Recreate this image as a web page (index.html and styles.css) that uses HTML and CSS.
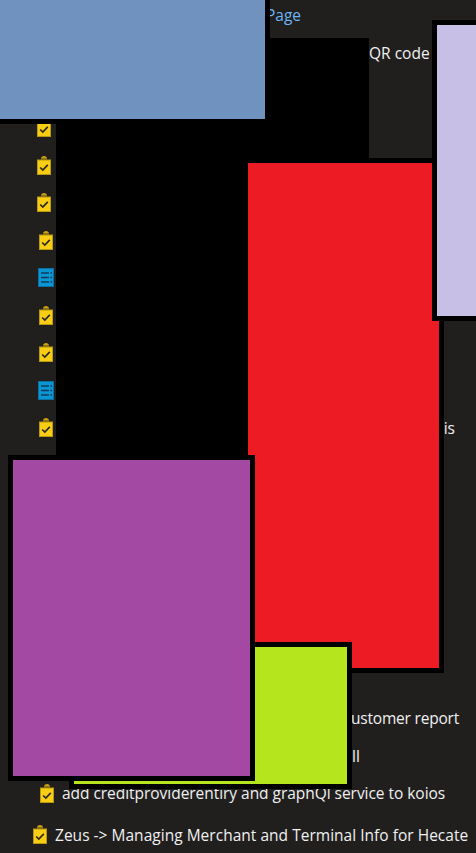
FILE: index.html
```html
<!DOCTYPE html>
<html lang="en">
<head>
<meta charset="utf-8">
<title>Work items</title>
<link rel="stylesheet" href="styles.css">
</head>
<body>
<svg class="defs" width="0" height="0" aria-hidden="true">
  <symbol id="task" viewBox="0 0 14 19">
    <path d="M4 4V2.600C4 1 5.400 0 7 0s3 1 3 2.600V4z" fill="#c9a012"/>
    <rect x="4" y="2.500" width="6" height="2.500" fill="#5c4a12"/>
    <rect x=".5" y="4" width="13" height="14.500" fill="#f8cd14" stroke="#b59a10"/>
    <path d="M3.200 11.500l2.600 2.600 5-5.300" fill="none" stroke="#2b2b26" stroke-width="1.700"/>
  </symbol>
  <symbol id="story" viewBox="0 0 16 19">
    <rect x=".5" y=".5" width="15" height="18" fill="#0a96d3" stroke="#0d6ea3"/>
    <path d="M3 5h8M3 9.500h8M3 14h8" stroke="#123a55" stroke-width="1.600"/>
    <path d="M12.500 5h1.500M12.500 9.500h1.500M12.500 14h1.500" stroke="#123a55" stroke-width="1.600"/>
  </symbol>
</svg>

<ul class="list">
  <li class="row row-page"><a class="link">Page</a></li>
  <li class="row row-qr">QR code</li>
  <li class="row row-i37 row-first"><svg class="ico"><use href="#task"/></svg></li>
  <li class="row row-i37"><svg class="ico"><use href="#task"/></svg></li>
  <li class="row row-i37"><svg class="ico"><use href="#task"/></svg></li>
  <li class="row row-i39"><svg class="ico"><use href="#task"/></svg></li>
  <li class="row row-i38"><svg class="ico doc"><use href="#story"/></svg></li>
  <li class="row row-i39"><svg class="ico"><use href="#task"/></svg></li>
  <li class="row row-i39"><svg class="ico"><use href="#task"/></svg></li>
  <li class="row row-i38"><svg class="ico doc"><use href="#story"/></svg></li>
  <li class="row row-i39 row-is"><svg class="ico"><use href="#task"/></svg><span>is</span></li>
  <li class="row row-report">ustomer report</li>
  <li class="row row-ll">ll</li>
  <li class="row row-koios"><svg class="ico"><use href="#task"/></svg><span>add creditproviderentiry and graphQl service to koios</span></li>
  <li class="row row-zeus"><svg class="ico"><use href="#task"/></svg><span>Zeus -&gt; Managing Merchant and Terminal Info for Hecate</span></li>
</ul>

<div class="block panel"></div>
<div class="block red"></div>
<div class="block lavender"></div>
<div class="block blue"></div>
<div class="block lime"></div>
<div class="block purple"></div>
</body>
</html>
```

FILE: styles.css
```css
* { box-sizing: border-box; }
html, body { margin: 0; height: 853px; overflow: hidden; }
body {
  position: relative;
  background: #201f1e;
  color: #f0f0f0;
  font: 15.5px/20px "Open Sans", "Noto Sans", sans-serif;
}
.defs { position: absolute; }
.list {
  list-style: none;
  margin: 0;
  padding: 0;
  display: flex;
  flex-direction: column;
  gap: 7.500px;
}
.row { height: 30px; display: flex; align-items: center; gap: 8px; white-space: nowrap; }
.link { color: #6cb4f5; }
.ico { width: 14px; height: 19px; flex: none; }
.doc { width: 16px; }
.row-page { padding-left: 266px; }
.row-qr { padding-left: 369px; }
.row-first { margin-top: 37.500px; }
.row-i37 { padding-left: 37px; }
.row-i38 { padding-left: 38px; }
.row-i39 { padding-left: 39px; }
.row-is { justify-content: space-between; padding-right: 21px; }
.row-report { padding-left: 351px; margin-top: 253px; letter-spacing: -.2px; }
.row-ll { padding-left: 352px; }
.row-koios { padding-left: 40px; letter-spacing: -.04px; }
.row-zeus { padding-left: 33px; margin-top: 4px; letter-spacing: .02px; }

.block { position: absolute; border: 5px solid #000; }
.panel { left: 56px; top: 38px; width: 313px; height: 420px; background: #000; border: 0; }
.blue { left: -5px; top: -5px; width: 275px; height: 129px; background: #7092be; }
.lavender { left: 432px; top: 20px; width: 60px; height: 301px; background: #c8bfe7; }
.red { left: 243px; top: 158px; width: 201px; height: 515px; background: #ed1c24; }
.lime { left: 69px; top: 642px; width: 283px; height: 147px; background: #b5e61d; }
.purple { left: 8px; top: 455px; width: 247px; height: 326px; background: #a349a4; }
```
